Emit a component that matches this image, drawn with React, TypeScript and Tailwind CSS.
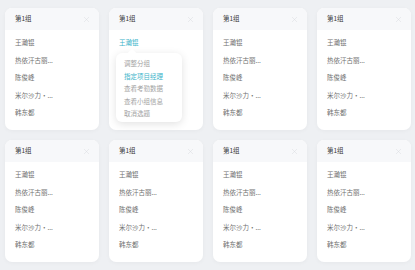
import { X } from "lucide-react";

// TYPES
type Group = {
    title: string;
    members: string[];
    menuOpen?: boolean;
};

const members = ["王瀚锟", "热依汗古丽...", "陈俊峰", "米尔沙力·...", "韩东都"];

const groups: Group[] = [
    { title: "第1组", members },
    { title: "第1组", members, menuOpen: true },
    { title: "第1组", members },
    { title: "第1组", members },
    { title: "第1组", members },
    { title: "第1组", members },
    { title: "第1组", members },
    { title: "第1组", members },
];

const menuItems = ["调整分组", "指定项目经理", "查看考勤数据", "查看小组信息", "取消选题"];

const GroupCard = ({ group }: { group: Group }) => {
    return (
        <div className="relative h-[122px] rounded-[7px] bg-white shadow-[0_1px_4px_rgba(0,0,0,0.04)]">
            <div className="flex h-[22px] items-center justify-between rounded-t-[7px] bg-[#f7f8fa] pl-[10px] pr-[8px]">
                <span className="text-[6.5px] text-[#3a3a3a]">{group.title}</span>
                <X className="h-[9px] w-[9px] text-[#d6d9de]" strokeWidth={1.2} />
            </div>
            <div className="pt-[4px] pl-[10px]">
                {group.members.map((m, i) => (
                    <p
                        key={i}
                        className={`h-[17.5px] text-[6.5px] leading-[17.5px] ${
                            group.menuOpen && i === 0 ? "text-[#3cb4ca]" : "text-[#707070]"
                        }`}
                    >
                        {m}
                    </p>
                ))}
            </div>

            {/* --------------- dropdown */}
            {group.menuOpen && (
                <div className="absolute left-[7px] top-[45px] w-[66px] rounded-[6px] bg-white pt-[4px] pb-[2px] pl-[8px] shadow-[0_2px_8px_rgba(0,0,0,0.12)]">
                    <div className="absolute -top-[3px] left-[13px] h-[6px] w-[6px] rotate-45 bg-white" />
                    {menuItems.map((item, i) => (
                        <p
                            key={item}
                            className={`relative h-[12.5px] text-[6.5px] leading-[12.5px] ${
                                i === 1 ? "text-[#3cb4ca]" : "text-[#a3a3a3]"
                            }`}
                        >
                            {item}
                        </p>
                    ))}
                </div>
            )}
        </div>
    );
};

const App = () => {
    return (
        <div
            className="h-[270px] w-[415px] overflow-hidden bg-[#eef0f3] pl-[5px] pt-[8px]"
            style={{ fontFamily: '"Noto Sans CJK SC", "Noto Sans", sans-serif' }}
        >
            <div className="grid grid-cols-[repeat(4,94px)] gap-[10px]">
                {groups.map((g, i) => (
                    <GroupCard key={i} group={g} />
                ))}
            </div>
        </div>
    );
};

export default App;
